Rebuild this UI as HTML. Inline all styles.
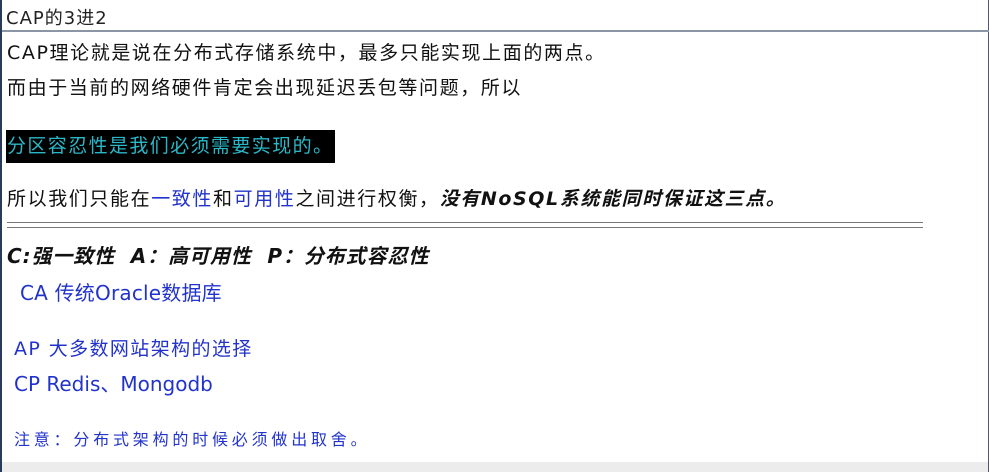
<!DOCTYPE html>
<html><head><meta charset="utf-8"><style>
body{margin:0;width:989px;height:472px;overflow:hidden;background:#fff;font-family:"DejaVu Sans","Noto Sans CJK SC",sans-serif;position:relative}
.l{position:absolute;left:7px;white-space:nowrap;font-size:19px;letter-spacing:1.6px;color:#111;line-height:24px}
.b{color:#2233cc}
</style></head><body>
<div style="position:absolute;left:0;top:0;width:2px;height:472px;background:#2a3a5a"></div>
<div style="position:absolute;right:0;top:0;width:1px;height:472px;background:#556"></div>
<div style="position:absolute;left:6px;top:4px;font-size:18px;color:#222;letter-spacing:1px">CAP的3进2</div>
<div style="position:absolute;left:2px;top:30px;width:987px;height:2px;background:#8a96a6"></div>
<div class="l" style="top:41px">CAP理论就是说在分布式存储系统中，最多只能实现上面的两点。</div>
<div class="l" style="top:76px">而由于当前的网络硬件肯定会出现延迟丢包等问题，所以</div>
<div style="position:absolute;left:6px;top:130px;width:329px;height:33px;background:#000"></div>
<div class="l" style="top:134px;color:#2ab8c8;letter-spacing:1.4px">分区容忍性是我们必须需要实现的。</div>
<div class="l" style="top:187px">所以我们只能在<span class="b">一致性</span>和<span class="b">可用性</span>之间进行权衡，<b><i>没有NoSQL系统能同时保证这三点。</i></b></div>
<div style="position:absolute;left:7px;top:222px;width:916px;height:6px;border-top:1px solid #777;border-bottom:1px solid #777;box-sizing:border-box"></div>
<div class="l" style="top:244px;letter-spacing:0.9px;font-size:20px"><b><i>C:强一致性&nbsp; A：高可用性&nbsp; P：分布式容忍性</i></b></div>
<div class="l b" style="top:281px;left:20px;font-size:20px;letter-spacing:0.2px">CA 传统Oracle数据库</div>
<div class="l b" style="top:337px;left:14px;letter-spacing:1.4px">AP 大多数网站架构的选择</div>
<div class="l b" style="top:372px;left:14px;font-size:20px;letter-spacing:0px">CP Redis、Mongodb</div>
<div class="l b" style="top:428px;left:14px;font-size:16px;letter-spacing:3.8px">注意：分布式架构的时候必须做出取舍。</div>
<div style="position:absolute;left:2px;top:462px;width:986px;height:10px;background:#ececec"></div>
</body></html>
